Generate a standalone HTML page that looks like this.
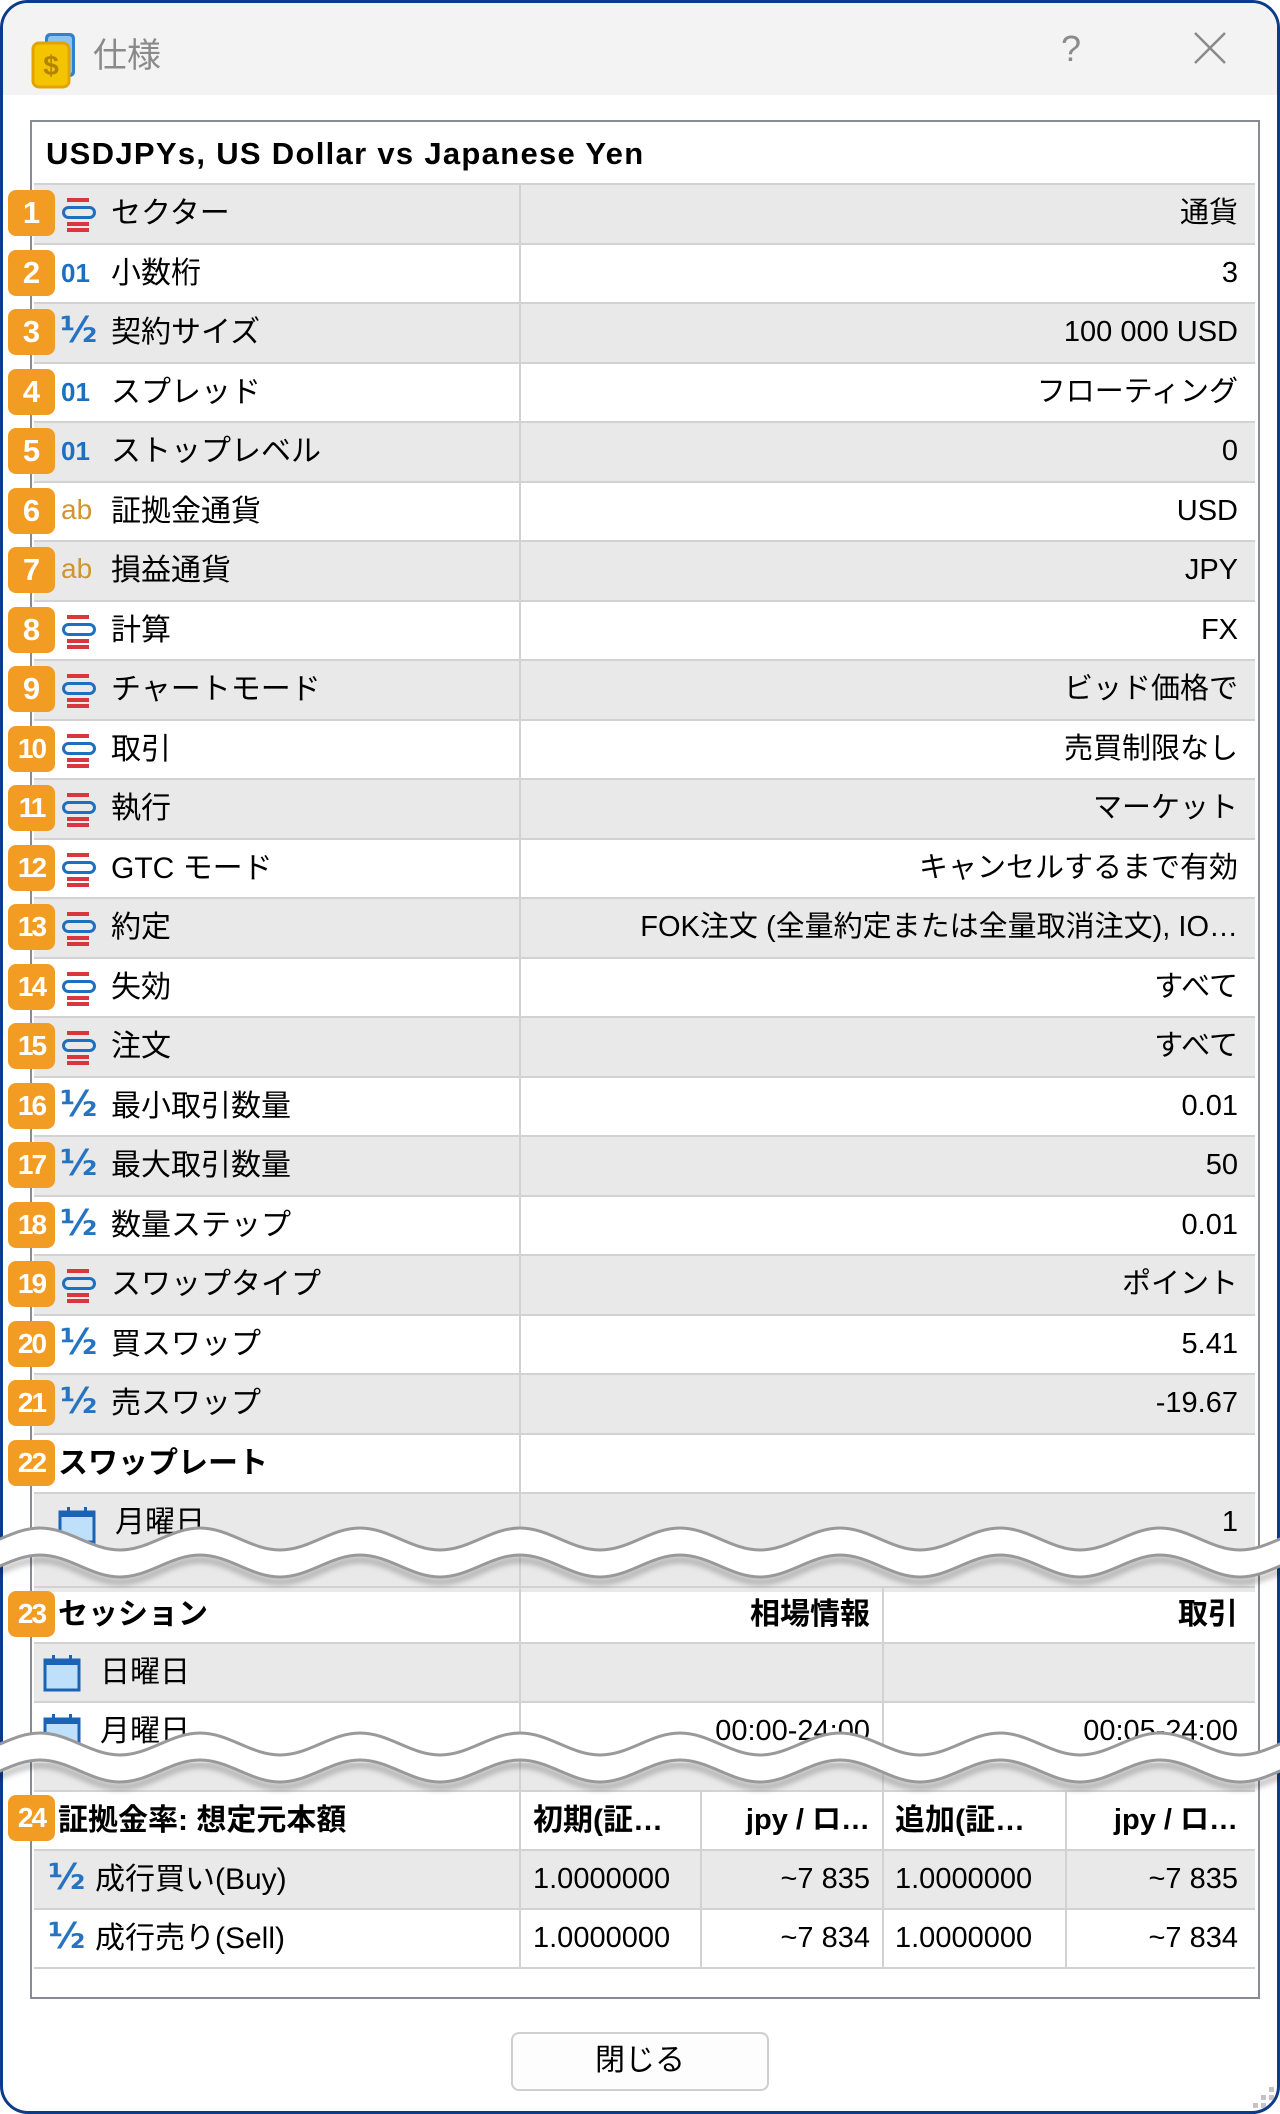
<!DOCTYPE html>
<html><head><meta charset="utf-8"><style>
*{margin:0;padding:0;box-sizing:border-box}
body{width:1280px;height:2114px;position:relative;background:#fff;font-family:"Liberation Sans","Noto Sans CJK JP",sans-serif;color:#000;overflow:hidden}
.win{position:absolute;left:0;top:0;width:1280px;height:2114px;border:3px solid #0d3b8c;border-radius:28px;background:#fff;overflow:hidden}
.tb{position:absolute;left:0;top:0;width:1280px;height:92px;background:#f3f3f3}
.box{position:absolute;left:27px;top:117px;width:1230px;height:1879px;border:2px solid #878b94;background:#fff}
.r{position:absolute;left:31px;width:1221px;height:60px;border-top:2px solid #d2d2d2;font-size:30px;line-height:57px;white-space:nowrap}
.g{background:#e9e9e9}
.l{position:absolute;left:77px;top:0}
.v{position:absolute;right:17px;top:0;font-size:29px}
.ic{position:absolute;left:28px;top:13px;width:34px;height:34px}
.t01{position:absolute;left:27px;top:0;color:#1e6fc0;font-size:26px;font-weight:bold}
.th{position:absolute;left:26px;top:-2px;color:#2673c2;font-size:36px;font-weight:bold;font-family:"DejaVu Sans",sans-serif}
.tab{position:absolute;left:27px;top:-2px;color:#d0952c;font-size:28px}
.bd{position:absolute;left:5px;width:47px;height:46px;background:#f39c24;border-radius:8px;color:#fff;font-weight:bold;font-size:31px;line-height:46px;text-align:center;z-index:5}
.bd.two{font-size:28px;letter-spacing:-2px}
.vl{position:absolute;width:2px;background:#d2d2d2}
.b{font-weight:bold}
.cal{position:absolute;width:38px;height:38px}
</style></head><body>
<svg width="0" height="0" style="position:absolute">
<defs>
<symbol id="lst" viewBox="0 0 34 34"><rect x="5" y="0" width="22" height="4" fill="#d9363e"/><rect x="1.5" y="9.5" width="31" height="10" rx="5" fill="none" stroke="#1f6fc0" stroke-width="3"/><rect x="5" y="24" width="22" height="4" fill="#d9363e"/><rect x="5" y="30" width="22" height="4" fill="#d9363e"/></symbol>
<symbol id="calx" viewBox="0 0 38 38"><rect x="2" y="6" width="34" height="30" fill="#bfe0fb" stroke="#1b63b5" stroke-width="3"/><rect x="2" y="6" width="34" height="5" fill="#1b63b5"/><rect x="9" y="1" width="3" height="8" fill="#1b63b5"/><rect x="26" y="1" width="3" height="8" fill="#1b63b5"/></symbol>
</defs></svg>
<div class="win">
<div class="tb"></div>
<svg style="position:absolute;left:28px;top:28px" width="48" height="58" viewBox="0 0 48 58"><rect x="14" y="2" width="30" height="44" rx="5" fill="#2e82d0"/><rect x="17" y="5" width="24" height="38" rx="3" fill="#8cc3f0"/><rect x="2" y="12" width="36" height="44" rx="6" fill="#f5c400" stroke="#e3a400" stroke-width="3"/><text x="20" y="44" font-size="28" font-weight="bold" text-anchor="middle" fill="#b08400" font-family="Liberation Sans">$</text></svg>
<div style="position:absolute;left:90px;top:30px;font-size:34px;color:#8a8a8a;line-height:40px;font-family:'Noto Sans CJK JP',sans-serif">仕様</div>
<div style="position:absolute;left:1058px;top:25px;font-size:36px;color:#8a8a8a;font-family:'Liberation Sans'">?</div>
<svg style="position:absolute;left:1190px;top:28px" width="34" height="34"><path d="M2 2L32 32M32 2L2 32" stroke="#8a8a8a" stroke-width="2.5"/></svg>

<div class="box"></div>
<div style="position:absolute;left:43px;top:124px;font-size:31px;letter-spacing:1.3px;font-weight:bold;line-height:54px">USDJPYs, US Dollar vs Japanese Yen</div>

<div class="r g" style="top:180px"><svg class="ic"><use href="#lst"/></svg><span class="l">セクター</span><span class="v">通貨</span></div>
<div class="r" style="top:239.5px"><span class="t01">01</span><span class="l">小数桁</span><span class="v">3</span></div>
<div class="r g" style="top:299px"><span class="th">½</span><span class="l">契約サイズ</span><span class="v">100 000 USD</span></div>
<div class="r" style="top:358.5px"><span class="t01">01</span><span class="l">スプレッド</span><span class="v">フローティング</span></div>
<div class="r g" style="top:418px"><span class="t01">01</span><span class="l">ストップレベル</span><span class="v">0</span></div>
<div class="r" style="top:477.5px"><span class="tab">ab</span><span class="l">証拠金通貨</span><span class="v">USD</span></div>
<div class="r g" style="top:537px"><span class="tab">ab</span><span class="l">損益通貨</span><span class="v">JPY</span></div>
<div class="r" style="top:596.5px"><svg class="ic"><use href="#lst"/></svg><span class="l">計算</span><span class="v">FX</span></div>
<div class="r g" style="top:656px"><svg class="ic"><use href="#lst"/></svg><span class="l">チャートモード</span><span class="v">ビッド価格で</span></div>
<div class="r" style="top:715.5px"><svg class="ic"><use href="#lst"/></svg><span class="l">取引</span><span class="v">売買制限なし</span></div>
<div class="r g" style="top:775px"><svg class="ic"><use href="#lst"/></svg><span class="l">執行</span><span class="v">マーケット</span></div>
<div class="r" style="top:834.5px"><svg class="ic"><use href="#lst"/></svg><span class="l">GTC モード</span><span class="v">キャンセルするまで有効</span></div>
<div class="r g" style="top:894px"><svg class="ic"><use href="#lst"/></svg><span class="l">約定</span><span class="v">FOK注文 (全量約定または全量取消注文), IO…</span></div>
<div class="r" style="top:953.5px"><svg class="ic"><use href="#lst"/></svg><span class="l">失効</span><span class="v">すべて</span></div>
<div class="r g" style="top:1013px"><svg class="ic"><use href="#lst"/></svg><span class="l">注文</span><span class="v">すべて</span></div>
<div class="r" style="top:1072.5px"><span class="th">½</span><span class="l">最小取引数量</span><span class="v">0.01</span></div>
<div class="r g" style="top:1132px"><span class="th">½</span><span class="l">最大取引数量</span><span class="v">50</span></div>
<div class="r" style="top:1191.5px"><span class="th">½</span><span class="l">数量ステップ</span><span class="v">0.01</span></div>
<div class="r g" style="top:1251px"><svg class="ic"><use href="#lst"/></svg><span class="l">スワップタイプ</span><span class="v">ポイント</span></div>
<div class="r" style="top:1310.5px"><span class="th">½</span><span class="l">買スワップ</span><span class="v">5.41</span></div>
<div class="r g" style="top:1370px"><span class="th">½</span><span class="l">売スワップ</span><span class="v">-19.67</span></div>
<div class="r" style="top:1429.5px"><span class="l b" style="left:24px">スワップレート</span></div>
<div class="r g" style="top:1489px;height:100px"><svg class="cal" style="left:24px;top:12px"><use href="#calx"/></svg><span class="l" style="left:81px">月曜日</span><span class="v">1</span></div>
<div class="vl" style="left:516px;top:180px;height:1409px"></div>

<div class="r" style="top:1583px;height:56px;line-height:54px"><span class="l b" style="left:24px">セッション</span><span class="v b" style="right:385px;font-size:30px">相場情報</span><span class="v b" style="font-size:30px">取引</span></div>
<div class="r g" style="top:1639px"><svg class="cal" style="left:9px;top:10px"><use href="#calx"/></svg><span class="l" style="left:66px">日曜日</span></div>
<div class="r" style="top:1698px;height:89px"><svg class="cal" style="left:9px;top:10px"><use href="#calx"/></svg><span class="l" style="left:66px">月曜日</span><span class="v" style="right:385px">00:00-24:00</span><span class="v">00:05-24:00</span></div>
<div class="r g" style="top:1760px;height:27px;border-top:none"></div>
<div class="vl" style="left:516px;top:1583px;height:204px"></div>
<div class="vl" style="left:879px;top:1583px;height:204px"></div>

<div class="r" style="top:1787px"><span class="l b" style="left:24px">証拠金率: 想定元本額</span><span class="l b" style="left:499px">初期(証…</span><span class="v b" style="right:385px">jpy / ロ…</span><span class="l b" style="left:861px">追加(証…</span><span class="v b">jpy / ロ…</span></div>
<div class="r g" style="top:1846px"><span class="th" style="left:14px">½</span><span class="l" style="left:61px">成行買い(Buy)</span><span class="l" style="left:499px;font-size:29px">1.0000000</span><span class="v" style="right:385px">~7 835</span><span class="l" style="left:861px;font-size:29px">1.0000000</span><span class="v">~7 835</span></div>
<div class="r" style="top:1905px;height:61px;border-bottom:2px solid #d2d2d2"><span class="th" style="left:14px">½</span><span class="l" style="left:61px">成行売り(Sell)</span><span class="l" style="left:499px;font-size:29px">1.0000000</span><span class="v" style="right:385px">~7 834</span><span class="l" style="left:861px;font-size:29px">1.0000000</span><span class="v">~7 834</span></div>
<div class="vl" style="left:516px;top:1787px;height:179px"></div>
<div class="vl" style="left:697px;top:1787px;height:179px"></div>
<div class="vl" style="left:879px;top:1787px;height:179px"></div>
<div class="vl" style="left:1062px;top:1787px;height:179px"></div>

<div class="bd" style="top:187px">1</div>
<div class="bd" style="top:246.5px">2</div>
<div class="bd" style="top:306px">3</div>
<div class="bd" style="top:365.5px">4</div>
<div class="bd" style="top:425px">5</div>
<div class="bd" style="top:484.5px">6</div>
<div class="bd" style="top:544px">7</div>
<div class="bd" style="top:603.5px">8</div>
<div class="bd" style="top:663px">9</div>
<div class="bd two" style="top:722.5px">10</div>
<div class="bd two" style="top:782px">11</div>
<div class="bd two" style="top:841.5px">12</div>
<div class="bd two" style="top:901px">13</div>
<div class="bd two" style="top:960.5px">14</div>
<div class="bd two" style="top:1020px">15</div>
<div class="bd two" style="top:1079.5px">16</div>
<div class="bd two" style="top:1139px">17</div>
<div class="bd two" style="top:1198.5px">18</div>
<div class="bd two" style="top:1258px">19</div>
<div class="bd two" style="top:1317.5px">20</div>
<div class="bd two" style="top:1377px">21</div>
<div class="bd two" style="top:1436.5px">22</div>
<div class="bd two" style="top:1588px">23</div>
<div class="bd two" style="top:1792px">24</div>

<div style="position:absolute;left:508px;top:2029px;width:258px;height:59px;border:2px solid #cfcfcf;border-radius:8px;background:#fdfdfd;text-align:center;font-size:30px;line-height:54px">閉じる</div>
<svg style="position:absolute;left:1250px;top:2084px" width="24" height="24"><g fill="#c4c4c4"><rect x="16" y="0" width="5" height="5"/><rect x="8" y="8" width="5" height="5"/><rect x="16" y="8" width="5" height="5"/><rect x="0" y="16" width="5" height="5"/><rect x="8" y="16" width="5" height="5"/><rect x="16" y="16" width="5" height="5"/></g></svg>
</div>

<svg style="position:absolute;left:0;top:1515px" width="1280" height="80" viewBox="0 0 1280 80">
<defs>
<path id="wu" d="M-120,13 C-91,13 -69,35 -40,35 S11,13 40,13 S91,35 120,35 S171,13 200,13 S251,35 280,35 S331,13 360,13 S411,35 440,35 S491,13 520,13 S571,35 600,35 S651,13 680,13 S731,35 760,35 S811,13 840,13 S891,35 920,35 S971,13 1000,13 S1051,35 1080,35 S1131,13 1160,13 S1211,35 1240,35 S1291,13 1320,13 S1371,35 1400,35"/>
<path id="wl" d="M-120,40 C-91,40 -69,62 -40,62 S11,40 40,40 S91,62 120,62 S171,40 200,40 S251,62 280,62 S331,40 360,40 S411,62 440,62 S491,40 520,40 S571,62 600,62 S651,40 680,40 S731,62 760,62 S811,40 840,40 S891,62 920,62 S971,40 1000,40 S1051,62 1080,62 S1131,40 1160,40 S1211,62 1240,62 S1291,40 1320,40 S1371,62 1400,62"/>
<mask id="m1"><rect x="-200" y="0" width="1700" height="80" fill="#000"/><path d="M-120,13 C-91,13 -69,35 -40,35 S11,13 40,13 S91,35 120,35 S171,13 200,13 S251,35 280,35 S331,13 360,13 S411,35 440,35 S491,13 520,13 S571,35 600,35 S651,13 680,13 S731,35 760,35 S811,13 840,13 S891,35 920,35 S971,13 1000,13 S1051,35 1080,35 S1131,13 1160,13 S1211,35 1240,35 S1291,13 1320,13 S1371,35 1400,35 L1400,80 L-120,80 Z" fill="#fff"/><path d="M-120,40 C-91,40 -69,62 -40,62 S11,40 40,40 S91,62 120,62 S171,40 200,40 S251,62 280,62 S331,40 360,40 S411,62 440,62 S491,40 520,40 S571,62 600,62 S651,40 680,40 S731,62 760,62 S811,40 840,40 S891,62 920,62 S971,40 1000,40 S1051,62 1080,62 S1131,40 1160,40 S1211,62 1240,62 S1291,40 1320,40 S1371,62 1400,62 L1400,80 L-120,80 Z" fill="#000"/></mask>
<filter id="bl" x="-10%" y="-100%" width="120%" height="300%"><feGaussianBlur stdDeviation="3"/></filter>
</defs>
<use href="#wl" transform="translate(0,5)" fill="none" stroke="#000" stroke-opacity="0.25" stroke-width="6" filter="url(#bl)"/>
<rect x="0" y="0" width="1280" height="80" fill="#fff" mask="url(#m1)"/>
<use href="#wu" fill="none" stroke="#999" stroke-width="3"/>
<use href="#wl" fill="none" stroke="#999" stroke-width="3"/>
</svg>
<svg style="position:absolute;left:0;top:1720px" width="1280" height="80" viewBox="0 0 1280 80">
<use href="#wl" transform="translate(0,5)" fill="none" stroke="#000" stroke-opacity="0.25" stroke-width="6" filter="url(#bl)"/>
<rect x="0" y="0" width="1280" height="80" fill="#fff" mask="url(#m1)"/>
<use href="#wu" fill="none" stroke="#999" stroke-width="3"/>
<use href="#wl" fill="none" stroke="#999" stroke-width="3"/>
</svg>
</body></html>
